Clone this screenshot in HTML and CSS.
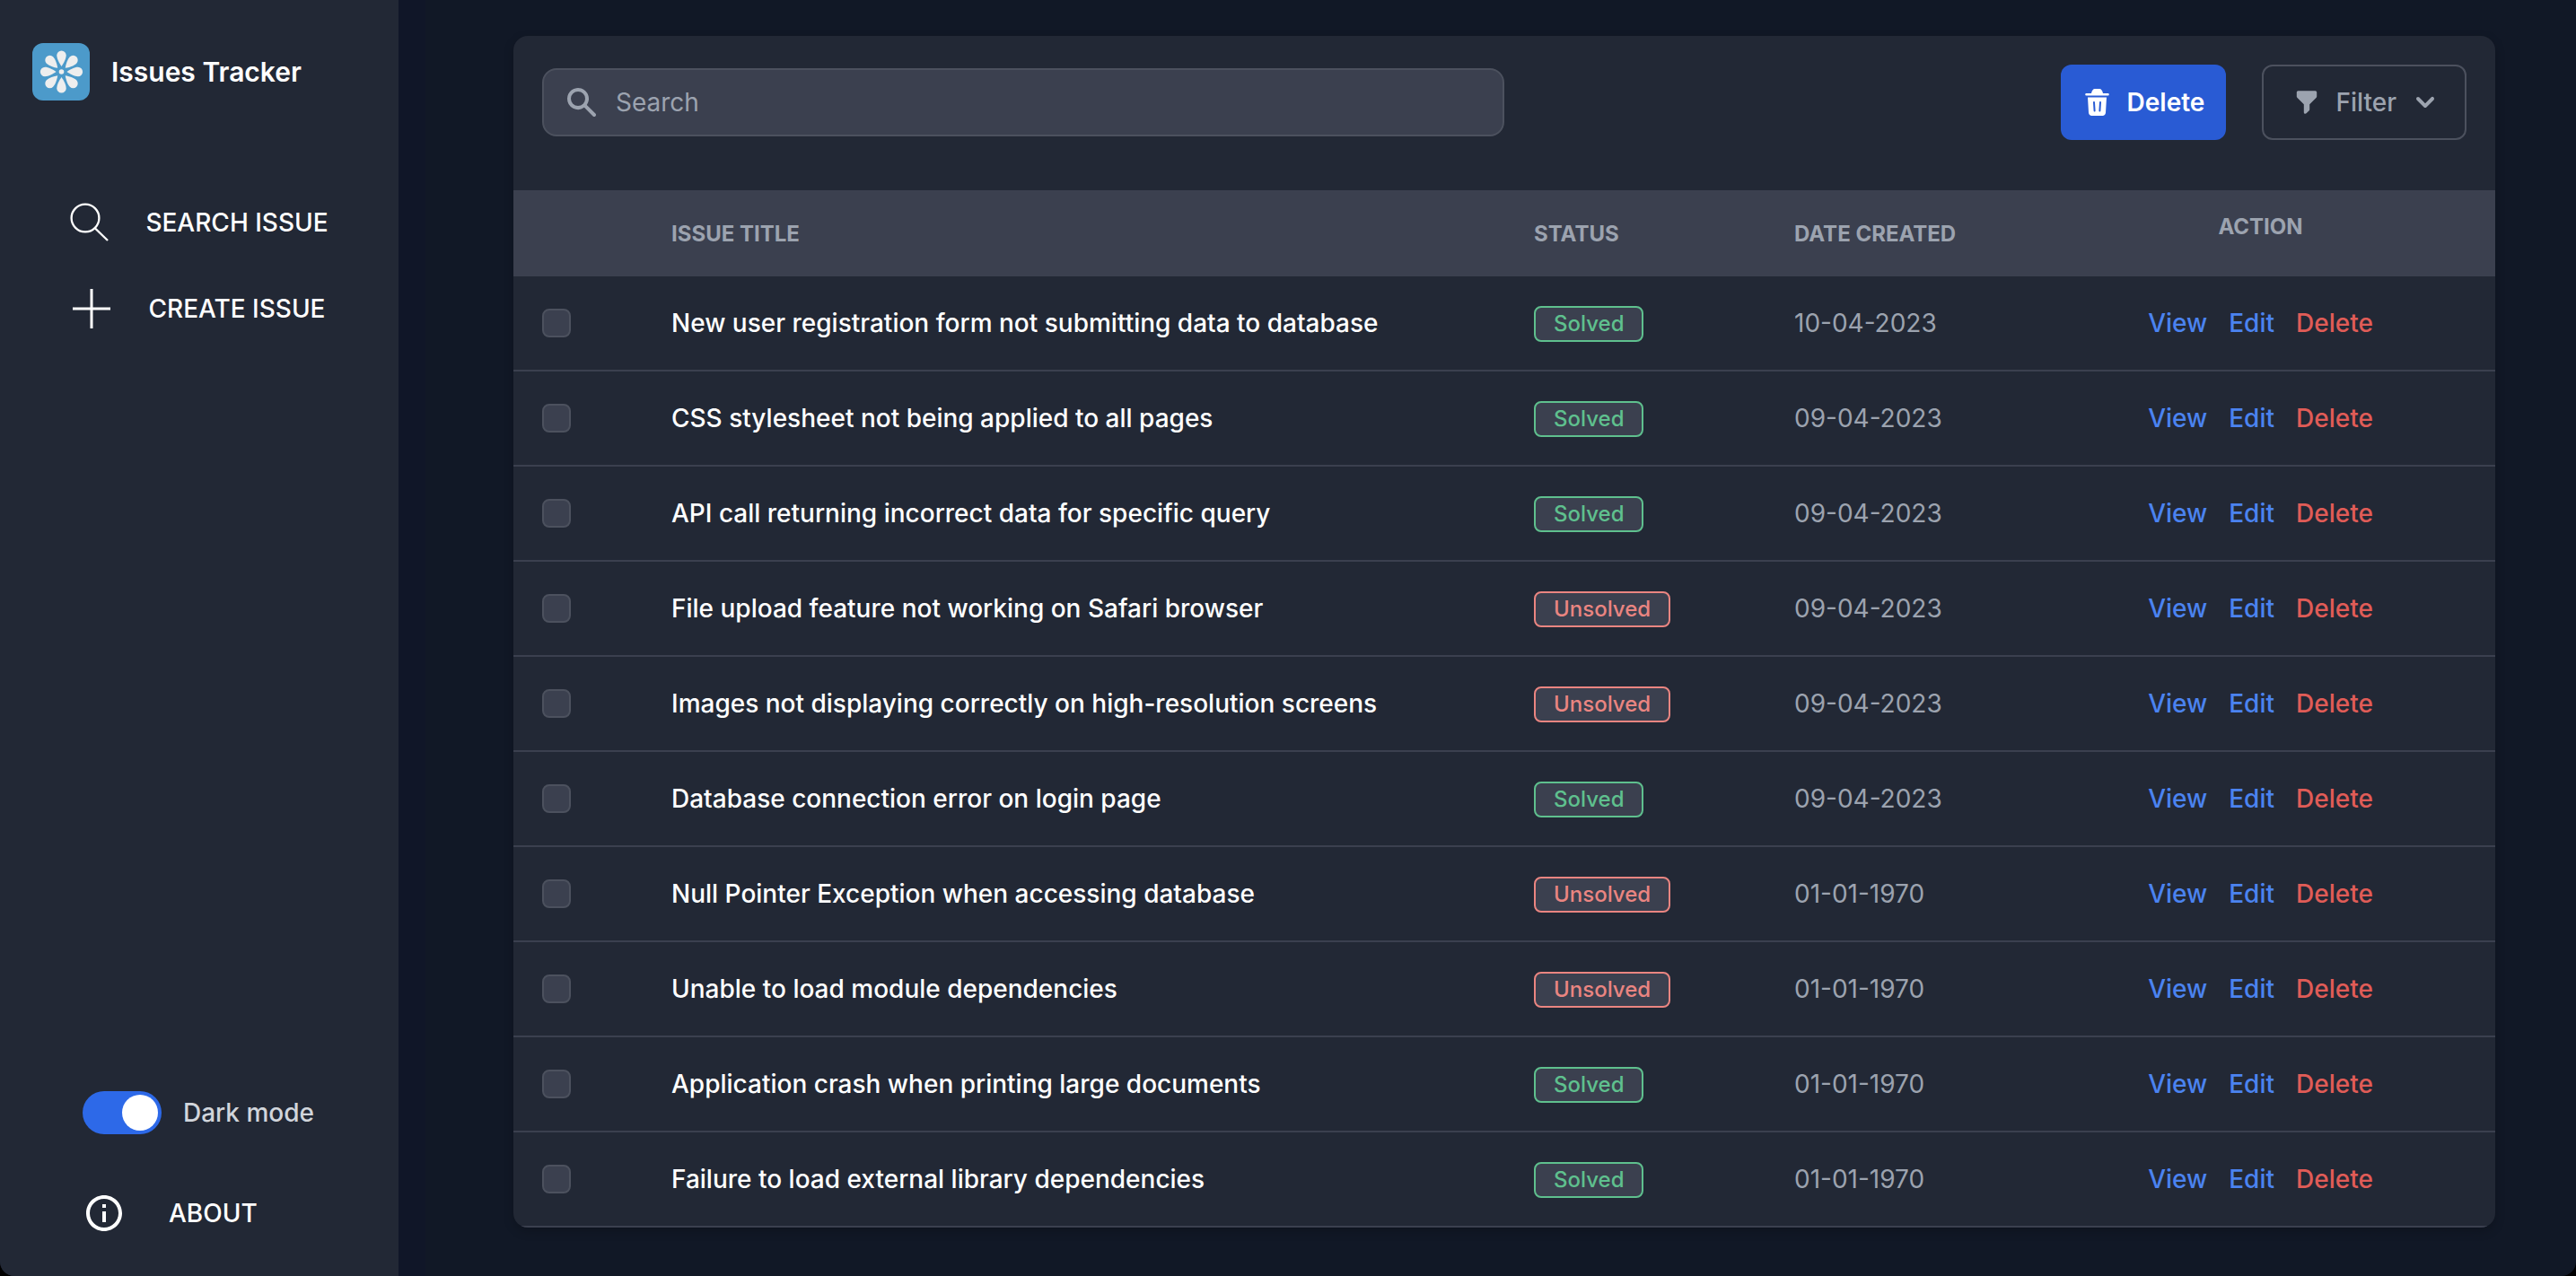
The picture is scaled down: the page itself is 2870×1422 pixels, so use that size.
FILE: index.html
```html
<!DOCTYPE html>
<html lang="en">
<head>
<meta charset="utf-8">
<title>Issues Tracker</title>
<link rel="stylesheet" href="styles.css">
</head>
<body>
<div class="app">
  <aside class="sidebar">
    <a class="brand" href="#">
      <svg class="brand-logo" viewBox="0 0 64 64" aria-hidden="true">
        <defs><path id="petal" d="M32.500 26C30 22.500 27.300 17.500 27.300 13.600A5.200 5.200 0 0 1 37.700 13.600C37.700 17.500 35 22.500 32.500 26Z"/></defs>
        <rect width="64" height="64" rx="12" fill="#4c9aca"/>
        <g fill="#eee">
          <use href="#petal"/>
          <use href="#petal" transform="rotate(45 32.500 32)"/>
          <use href="#petal" transform="rotate(90 32.500 32)"/>
          <use href="#petal" transform="rotate(135 32.500 32)"/>
          <use href="#petal" transform="rotate(180 32.500 32)"/>
          <use href="#petal" transform="rotate(225 32.500 32)"/>
          <use href="#petal" transform="rotate(270 32.500 32)"/>
          <use href="#petal" transform="rotate(315 32.500 32)"/>
          <circle cx="32.500" cy="32" r="2.800"/>
        </g>
      </svg>
      <span>Issues Tracker</span>
    </a>
    <nav class="nav">
      <a class="nav-link" href="#">
        <svg class="nav-icon" viewBox="0 0 48 48" fill="none" stroke="#fff" stroke-width="2.300" aria-hidden="true"><circle cx="19" cy="19" r="15.400"/><path d="M30 30.500L44 44"/></svg>
        <span class="nav-label">SEARCH ISSUE</span>
      </a>
      <a class="nav-link" href="#">
        <svg class="nav-icon" viewBox="0 0 48 48" fill="none" stroke="#fff" stroke-width="3" aria-hidden="true"><path d="M26 2v44M5 24h42"/></svg>
        <span class="nav-label">CREATE ISSUE</span>
      </a>
    </nav>
    <div class="sidebar-foot">
      <label class="switch"><input class="switch-input" type="checkbox" role="switch" checked><span>Dark mode</span></label>
      <a class="about" href="#">
        <svg class="about-icon" viewBox="0 0 24 24" fill="#fff" aria-hidden="true"><path d="M11 7h2v2h-2zm0 4h2v6h-2zm1-9C6.480 2 2 6.480 2 12s4.480 10 10 10 10-4.480 10-10S17.520 2 12 2zm0 18c-4.410 0-8-3.590-8-8s3.590-8 8-8 8 3.590 8 8-3.590 8-8 8z"/></svg>
        <span>ABOUT</span>
      </a>
    </div>
  </aside>
  <main class="main">
    <section class="card">
      <div class="toolbar">
        <label class="search">
          <svg class="search-icon" viewBox="0 0 20 20" fill="currentColor" aria-hidden="true"><path fill-rule="evenodd" clip-rule="evenodd" d="M8 4a4 4 0 100 8 4 4 0 000-8zM2 8a6 6 0 1110.890 3.476l4.817 4.817a1 1 0 01-1.414 1.414l-4.816-4.816A6 6 0 012 8z"/></svg>
          <input class="search-input" type="search" placeholder="Search" aria-label="Search">
        </label>
        <div class="actions">
          <button class="btn btn-primary" type="button">
            <svg class="trash-icon" viewBox="0 0 32 32" aria-hidden="true"><path fill="#fff" d="M10 6C10.500 3 12 1 14 1h5c2 0 3.500 2 4 5h5.500a1.300 1.300 0 0 1 0 2.600h-24a1.300 1.300 0 0 1 0-2.600zM6 10.500h21l-1 17c-.2 2-1.500 3.500-3.500 3.500h-12c-2 0-3.300-1.500-3.500-3.500z"/><path stroke="#295bd4" stroke-width="2" stroke-linecap="round" d="M13 16l.6 9.500M20 16l-.6 9.500"/></svg>
            <span>Delete</span>
          </button>
          <button class="btn btn-outline" type="button">
            <svg class="filter-icon" viewBox="0 0 20 20" fill="currentColor" aria-hidden="true"><path fill-rule="evenodd" clip-rule="evenodd" d="M3 3a1 1 0 011-1h12a1 1 0 011 1v3a1 1 0 01-.293.707L12 11.414V15a1 1 0 01-.293.707l-2 2A1 1 0 018 17v-5.586L3.293 6.707A1 1 0 013 6V3z"/></svg>
            <span>Filter</span>
            <svg class="chevron-icon" viewBox="0 0 20 20" fill="currentColor" aria-hidden="true"><path fill-rule="evenodd" clip-rule="evenodd" d="M5.293 7.293a1 1 0 011.414 0L10 10.586l3.293-3.293a1 1 0 111.414 1.414l-4 4a1 1 0 01-1.414 0l-4-4a1 1 0 010-1.414z"/></svg>
          </button>
        </div>
      </div>
      <table class="issues">
        <colgroup><col class="col-check"><col><col class="col-status"><col class="col-date"><col class="col-action"></colgroup>
        <thead>
          <tr><th aria-label="Select"></th><th>ISSUE TITLE</th><th>STATUS</th><th>DATE CREATED</th><th class="action-head">ACTION</th></tr>
        </thead>
        <tbody id="rows"></tbody>
      </table>
    </section>
  </main>
</div>
<script src="issues.js"></script>
</body>
</html>
```

FILE: issues.js
```js
const issues = [
  ["New user registration form not submitting data to database", true, "10-04-2023"],
  ["CSS stylesheet not being applied to all pages", true, "09-04-2023"],
  ["API call returning incorrect data for specific query", true, "09-04-2023"],
  ["File upload feature not working on Safari browser", false, "09-04-2023"],
  ["Images not displaying correctly on high-resolution screens", false, "09-04-2023"],
  ["Database connection error on login page", true, "09-04-2023"],
  ["Null Pointer Exception when accessing database", false, "01-01-1970"],
  ["Unable to load module dependencies", false, "01-01-1970"],
  ["Application crash when printing large documents", true, "01-01-1970"],
  ["Failure to load external library dependencies", true, "01-01-1970"]
];

document.getElementById("rows").innerHTML = issues.map(([title, solved, date], i) => `
  <tr>
    <td><input class="check" type="checkbox" aria-labelledby="issue-${i}"></td>
    <td class="title" id="issue-${i}">${title}</td>
    <td><span class="badge ${solved ? "badge-solved" : "badge-unsolved"}">${solved ? "Solved" : "Unsolved"}</span></td>
    <td class="date">${date}</td>
    <td><div class="links"><a class="link" href="#">View</a><a class="link" href="#">Edit</a><a class="link link-danger" href="#">Delete</a></div></td>
  </tr>`).join("");
```

FILE: styles.css
```css
*, *::before, *::after { box-sizing: border-box; }

html { background: #000; }

body {
  margin: 0;
  color: #fff;
  font-family: Inter, "Liberation Sans", sans-serif;
  font-size: 28px;
  line-height: 40px;
}

a { color: inherit; text-decoration: none; }
svg { display: block; flex: none; }

.app {
  display: flex;
  overflow: hidden;
  min-height: 100vh;
  border-radius: 0 0 16px 16px;
  background: #111826;
}

.sidebar {
  display: flex;
  flex-direction: column;
  flex: none;
  width: 444px;
  padding: 48px 36px 46px;
  background: #222835;
}
.brand { display: flex; align-items: center; gap: 24px; font-size: 30px; font-weight: 600; }
.brand-logo { width: 64px; height: 64px; }

.nav { display: flex; flex-direction: column; gap: 48px; margin-top: 112px; padding: 0 4px 0 40px; }
.nav-link { display: flex; align-items: center; height: 48px; font-weight: 500; }
.nav-icon { width: 48px; height: 48px; }
.nav-label { flex: 1; text-align: center; }

.sidebar-foot { display: flex; flex-direction: column; gap: 64px; margin-top: auto; padding-left: 56px; }
.switch { display: flex; align-items: center; gap: 24px; color: #d1d5db; font-weight: 500; }
.switch-input {
  appearance: none;
  display: flex;
  justify-content: flex-end;
  width: 88px;
  height: 48px;
  margin: 0;
  padding: 4px;
  border-radius: 24px;
  background: #2d69e8;
}
.switch-input::before { content: ""; width: 40px; height: 40px; border-radius: 50%; background: #fff; }
.switch-input:not(:checked) { justify-content: flex-start; background: #3b404f; }
.about { display: flex; align-items: center; gap: 48px; font-weight: 500; }
.about-icon { width: 48px; height: 48px; }

.main { flex: 1; min-width: 0; padding: 40px 90px 54px 98px; border-left: 30px solid #101628; }
.card { overflow: hidden; border-radius: 16px; background: #222835; box-shadow: 0 4px 12px rgb(0 0 0 / 20%); }

.toolbar { display: flex; align-items: center; justify-content: space-between; padding: 32px 32px 56px; }
.search {
  display: flex;
  align-items: center;
  gap: 18px;
  width: 50%;
  height: 76px;
  padding: 0 22px;
  border: 2px solid #4c515e;
  border-radius: 16px;
  background: #3b404f;
  color: #9ca3af;
}
.search-icon { width: 40px; height: 40px; }
.search-input {
  flex: 1;
  min-width: 0;
  padding: 0;
  border: 0;
  outline: 0;
  background: none;
  color: #fff;
  font: inherit;
}
.search-input::placeholder { color: #9ca3af; opacity: 1; }

.actions { display: flex; gap: 40px; }
.btn {
  display: flex;
  align-items: center;
  height: 84px;
  border: 2px solid transparent;
  border-radius: 12px;
  font: inherit;
}
.btn-primary { gap: 18px; padding: 0 22px; background: #295bd4; color: #fff; font-weight: 600; }
.btn-outline { gap: 12px; padding: 0 24px 0 32px; border-color: #4c515e; background: none; color: #9ca3af; font-weight: 500; }
.trash-icon { width: 32px; height: 32px; }
.filter-icon { width: 32px; height: 32px; margin-right: 4px; }
.chevron-icon { width: 40px; height: 40px; }

.issues { width: 100%; border-spacing: 0; table-layout: fixed; }
.col-check { width: 144px; }
.col-status, .col-date { width: 290px; }
.col-action { width: 523px; }
.issues th {
  height: 96px;
  padding: 2px 32px 0;
  background: #3b404f;
  color: #9ca3af;
  font-size: 24px;
  font-weight: 700;
  line-height: 32px;
  text-align: left;
}
.issues .action-head { padding-bottom: 16px; text-align: center; }
.issues td { height: 106px; padding: 0 32px; border-bottom: 2px solid #3b404f; }
.check {
  appearance: none;
  display: block;
  width: 32px;
  height: 32px;
  margin: 0;
  border: 2px solid #4c515e;
  border-radius: 8px;
  background: #3b404f;
}
.check:checked { background: #2d69e8; }
.issues .title { font-weight: 500; }
.date { color: #9ca3af; }
.badge {
  display: inline-block;
  padding: 0 20px;
  border: 2px solid;
  border-radius: 8px;
  background: #3b404f;
  font-size: 24px;
  font-weight: 500;
  line-height: 36px;
  vertical-align: middle;
}
.badge-solved { color: #5fc08e; }
.badge-unsolved { color: #ea8581; }
.links { display: flex; justify-content: center; gap: 24px; font-weight: 500; }
.link { color: #4b83f0; }
.link-danger { color: #e05c57; }
```
